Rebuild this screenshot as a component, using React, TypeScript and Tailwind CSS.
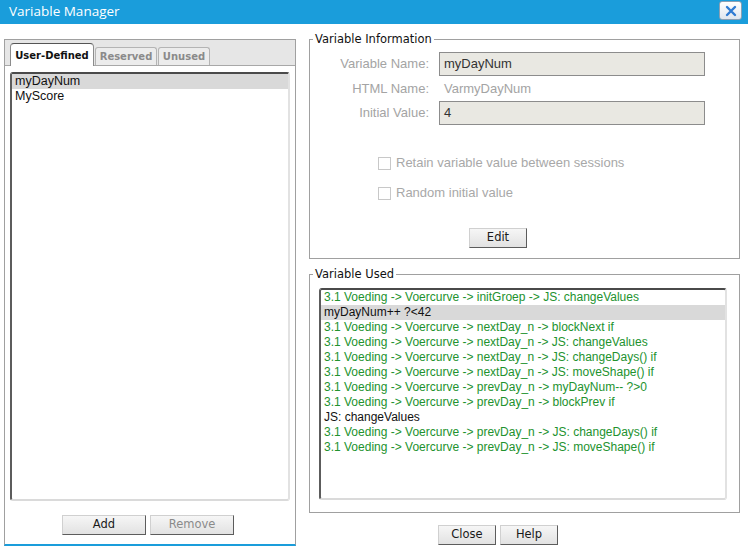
import React from "react";

const usedItems: { t: string; g: boolean; sel?: boolean }[] = [
  { t: "3.1 Voeding -> Voercurve -> initGroep -> JS: changeValues", g: true },
  { t: "myDayNum++ ?<42", g: false, sel: true },
  { t: "3.1 Voeding -> Voercurve -> nextDay_n -> blockNext if", g: true },
  { t: "3.1 Voeding -> Voercurve -> nextDay_n -> JS: changeValues", g: true },
  { t: "3.1 Voeding -> Voercurve -> nextDay_n -> JS: changeDays() if", g: true },
  { t: "3.1 Voeding -> Voercurve -> nextDay_n -> JS: moveShape() if", g: true },
  { t: "3.1 Voeding -> Voercurve -> prevDay_n -> myDayNum-- ?>0", g: true },
  { t: "3.1 Voeding -> Voercurve -> prevDay_n -> blockPrev if", g: true },
  { t: "JS: changeValues", g: false },
  { t: "3.1 Voeding -> Voercurve -> prevDay_n -> JS: changeDays() if", g: true },
  { t: "3.1 Voeding -> Voercurve -> prevDay_n -> JS: moveShape() if", g: true },
];

function Btn({ label, w, disabled }: { label: string; w: string; disabled?: boolean }) {
  return (
    <div
      className={`${w} h-[20px] flex items-center justify-center bg-gradient-to-b from-[#f6f6f6] to-[#e2e2e2] border border-[#d0d0d0] border-r-[#5c5c5c] border-b-[#5c5c5c] text-[11.5px] font-['DejaVu_Sans',sans-serif] ${
        disabled ? "text-[#8a8a8a]" : "text-[#1a1a1a]"
      }`}
    >
      {label}
    </div>
  );
}

export default function App() {
  return (
    <div className="w-[748px] h-[552px] bg-white overflow-hidden font-['Liberation_Sans',Arial,sans-serif]">
      {/* Title bar */}
      <div className="h-[24px] bg-[#1a9ddb] flex justify-between pl-[9px] pr-[6px]">
        <div className="text-white text-[13.5px] leading-[22px] font-['Open_Sans',sans-serif]">Variable Manager</div>
        <div className="mt-[1px] w-[23px] h-[19px] rounded-[3px] border border-[#8aa0b4] bg-gradient-to-b from-[#ffffff] to-[#dfe6ee] flex items-center justify-center">
          <svg width="12" height="12" viewBox="0 0 12 12">
            <path d="M2 2 L10 10 M10 2 L2 10" stroke="#2f7bd2" strokeWidth="2.4" strokeLinecap="round" />
          </svg>
        </div>
      </div>

      <div className="flex">
        {/* Left panel */}
        <div className="ml-[4px] mt-[15px] w-[292px] h-[507px] border border-[#a0a0a0] border-b-2 border-b-[#1a9ddb] flex flex-col">
          <div className="h-[26px] bg-[#e6e6e6] border-b border-[#a8a8a8] flex items-end pl-[5px] gap-[1px] font-['DejaVu_Sans',sans-serif] font-bold text-[10px]">
            <div className="w-[84px] h-[23px] mb-[-1px] bg-white border border-[#8c8c8c] border-t-[#555] border-b-0 rounded-t-[4px] flex items-center justify-center text-[#111]">
              User-Defined
            </div>
            <div className="w-[62px] h-[18px] bg-[#ececec] border border-[#b4b4b4] border-b-0 rounded-t-[3px] flex items-center justify-center text-[#8a8a8a]">
              Reserved
            </div>
            <div className="w-[52px] h-[18px] bg-[#ececec] border border-[#b4b4b4] border-b-0 rounded-t-[3px] flex items-center justify-center text-[#8a8a8a]">
              Unused
            </div>
          </div>
          <div className="flex-1 bg-white flex flex-col">
            <div className="ml-[5px] mt-[6px] w-[280px] h-[429px] rounded-[3px] border-2 border-t-[#4a4a4a] border-l-[#5c5c5c] border-r-[#e2e2e2] border-b-[#dadada] text-[12.5px]">
              <div className="h-[15px] leading-[15px] bg-[#d9d9d9] pl-[3px] text-[#111]">myDayNum</div>
              <div className="h-[15px] leading-[15px] pl-[3px] text-[#111]">MyScore</div>
            </div>
            <div className="mt-[14px] flex justify-center gap-[4px] pr-[4px]">
              <Btn label="Add" w="w-[84px]" />
              <Btn label="Remove" w="w-[84px]" disabled />
            </div>
          </div>
        </div>

        {/* Right column */}
        <div className="ml-[13px] mt-[7px] w-[431px] flex flex-col">
          <fieldset className="h-[228px] border border-[#a0a0a0]">
            <legend className="ml-[3px] px-[2px] text-[11.5px] leading-[16px] text-[#111] font-['DejaVu_Sans',sans-serif]">
              Variable Information
            </legend>
            <div className="mt-[5px] flex flex-col text-[13px]">
              <div className="h-[24px] flex items-center">
                <div className="w-[119px] text-right text-[#a4a4a4]">Variable Name:</div>
                <div className="ml-[10px] w-[266px] h-[24px] bg-[#e9e8e2] border border-[#8c8c8c] pl-[4px] flex items-center text-[#333]">
                  myDayNum
                </div>
              </div>
              <div className="h-[25px] flex items-center">
                <div className="w-[119px] text-right text-[#a4a4a4]">HTML Name:</div>
                <div className="ml-[15px] text-[#a4a4a4]">VarmyDayNum</div>
              </div>
              <div className="h-[24px] flex items-center">
                <div className="w-[119px] text-right text-[#a4a4a4]">Initial Value:</div>
                <div className="ml-[10px] w-[266px] h-[24px] bg-[#e9e8e2] border border-[#8c8c8c] pl-[4px] flex items-center text-[#333]">
                  4
                </div>
              </div>
              <div className="mt-[29px] h-[18px] flex items-center pl-[68px]">
                <div className="w-[13px] h-[13px] border border-[#c8c8c8] bg-white" />
                <div className="ml-[5px] text-[#a8a8a8]">Retain variable value between sessions</div>
              </div>
              <div className="mt-[12px] h-[18px] flex items-center pl-[68px]">
                <div className="w-[13px] h-[13px] border border-[#c8c8c8] bg-white" />
                <div className="ml-[5px] text-[#a8a8a8]">Random initial value</div>
              </div>
              <div className="mt-[26px] ml-[159px]">
                <Btn label="Edit" w="w-[58px]" />
              </div>
            </div>
          </fieldset>

          <fieldset className="mt-[7px] h-[247px] border border-[#a0a0a0]">
            <legend className="ml-[3px] px-[2px] text-[11.5px] leading-[16px] text-[#111] font-['DejaVu_Sans',sans-serif]">
              Variable Used
            </legend>
            <div className="ml-[9px] mt-[6px] w-[408px] h-[212px] rounded-[3px] border-2 border-t-[#4a4a4a] border-l-[#5c5c5c] border-r-[#e2e2e2] border-b-[#dadada] text-[12px]">
              {usedItems.map((it, i) => (
                <div
                  key={i}
                  className={`h-[15px] leading-[15px] pl-[3px] whitespace-nowrap ${it.sel ? "bg-[#d9d9d9]" : ""} ${
                    it.g ? "text-[#22922e]" : "text-[#111]"
                  }`}
                >
                  {it.t}
                </div>
              ))}
            </div>
          </fieldset>

          <div className="mt-[12px] ml-[129px] flex gap-[4px]">
            <Btn label="Close" w="w-[58px]" />
            <Btn label="Help" w="w-[58px]" />
          </div>
        </div>
      </div>
    </div>
  );
}
